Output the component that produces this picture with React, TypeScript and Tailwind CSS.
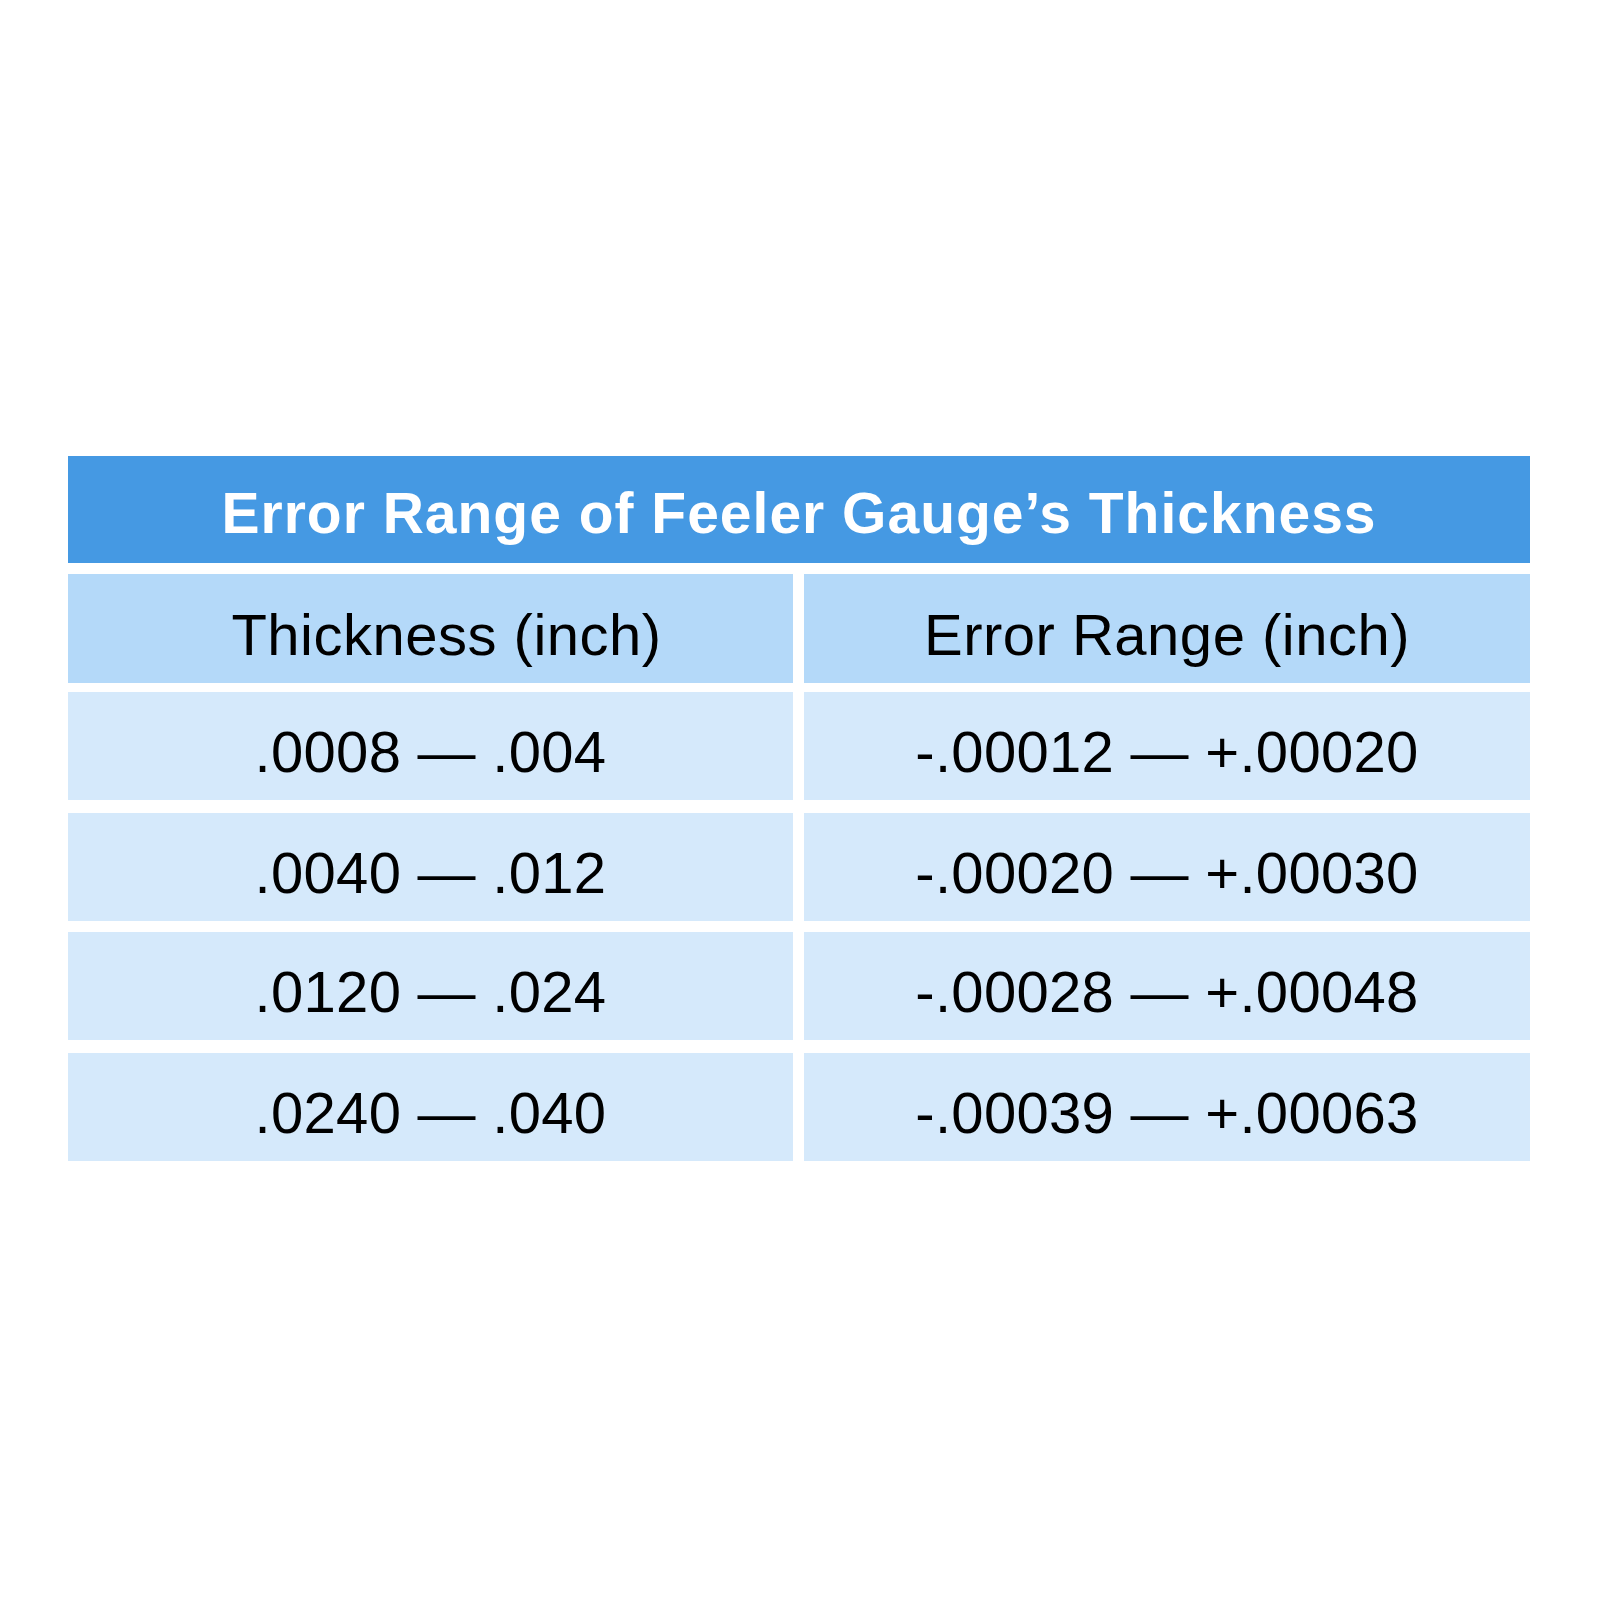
import React from 'react';

const rows: { thickness: string; range: string; mt: string }[] = [
  { thickness: '.0008 — .004', range: '-.00012 — +.00020', mt: 'mt-[9px]' },
  { thickness: '.0040 — .012', range: '-.00020 — +.00030', mt: 'mt-[13px]' },
  { thickness: '.0120 — .024', range: '-.00028 — +.00048', mt: 'mt-[11px]' },
  { thickness: '.0240 — .040', range: '-.00039 — +.00063', mt: 'mt-[13px]' },
];

const Cell = ({
  children,
  tone,
  className = '',
}: {
  children: React.ReactNode;
  tone: 'head' | 'body';
  className?: string;
}) => (
  <div
    className={`flex h-full items-center justify-center pt-[12px] text-[58px] tracking-[0.3px] leading-none text-black ${
      tone === 'head' ? 'bg-[#b4d9f9]' : 'bg-[#d5e9fb]'
    } ${className}`}
  >
    {children}
  </div>
);

const App = () => {
  return (
    <div className="w-[1600px] h-[1600px] bg-white font-['Liberation_Sans',Arial,sans-serif]">
      <div className="pt-[456px] pl-[68px] w-[1530px]">
        <div className="flex h-[107px] items-center justify-center pt-[8px] bg-[#4599e3] text-[57px] font-bold tracking-[1px] leading-none text-white">
          Error Range of Feeler Gauge’s Thickness
        </div>

        <div className="mt-[11px] grid h-[109px] grid-cols-[725px_726px] gap-x-[11px]">
          <Cell tone="head" className="pl-[32px] tracking-[0.5px]">Thickness (inch)</Cell>
          <Cell tone="head" className="tracking-[0.5px]">Error Range (inch)</Cell>
        </div>

        {rows.map((r) => (
          <div key={r.thickness} className={`${r.mt} grid h-[108px] grid-cols-[725px_726px] gap-x-[11px]`}>
            <Cell tone="body">{r.thickness}</Cell>
            <Cell tone="body">{r.range}</Cell>
          </div>
        ))}
      </div>
    </div>
  );
};

export default App;
